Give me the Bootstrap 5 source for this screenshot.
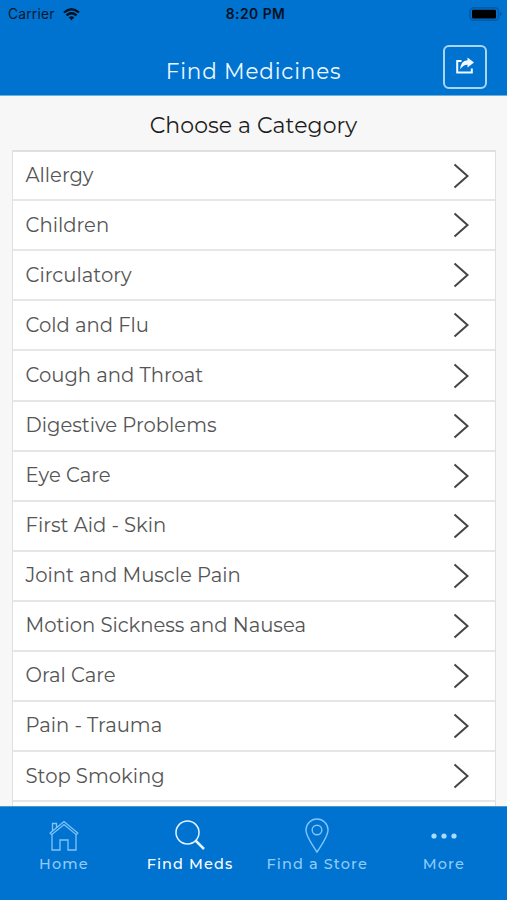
<!DOCTYPE html>
<html lang="en">
<head>
<meta charset="utf-8">
<meta name="viewport" content="width=device-width, initial-scale=1">
<title>Find Medicines</title>
<link href="https://cdn.jsdelivr.net/npm/bootstrap@5.3.0/dist/css/bootstrap.min.css" rel="stylesheet">
<style>
body{font-family:Montserrat,Inter,sans-serif;background:#f7f7f7;color:#1d1d1d}
svg{display:block;flex:none}
.app-top{height:96px;background:#0073d1;border-bottom:1px solid #6db0dc}
.status{height:28px;padding:0 4px 0 8px;font-family:Inter,sans-serif;font-size:13.8px;letter-spacing:.2px;color:#06182c;line-height:28px}
.status .clock{font-weight:600;font-size:13.8px;letter-spacing:.5px;color:#03101e}
.title-bar{height:67px;padding:17px 20px 6px}
.title-spacer{width:44px}
.page-title{font-size:21.5px;letter-spacing:.85px;color:#eef8ff;line-height:28px;padding-top:12px}
.share{width:44px;height:44px;border:2px solid #a9d5f7;border-radius:6px;padding:0}
.heading{font-size:22px;height:54px;line-height:60px;letter-spacing:.08px}
.app-main{height:710px}
.cats{margin:0 11px 0 12px;border:1.5px solid #e0e0e0;border-top-width:2px;border-bottom:0;border-radius:0}
.cats .list-group-item{height:50.1px;border:0;border-bottom:2px solid #e6e6e6;padding:0 25px 0 12.500px;color:#555;font-size:19.6px;border-radius:0}
.cats .list-group-item:first-child{height:49.2px}
.tabs{height:94px;background:#0073d1;border-top:1px solid #4f97c8}
.tab{width:126.7px;padding:9px 0 0 1px;font-size:14.5px;letter-spacing:1.1px;color:#91cbf8;line-height:21px;text-decoration:none;font-weight:500}
.tab svg{height:38px}
.tab.active{color:#fff;padding-left:0}
</style>
</head>
<body class="overflow-hidden">
<header class="app-top">
  <div class="status d-flex justify-content-between align-items-center">
    <div class="d-flex align-items-center gap-2 col-4"><span>Carrier</span>
      <svg width="17" height="13" viewBox="0 0 17 13" fill="none" stroke="#03101e" stroke-width="2.3"><path d="M1 4.5Q8.500-2 16 4.500M3.500 7.400Q8.500 3.100 13.500 7.400"/><path d="M5.700 9.300Q8.500 7.200 11.300 9.300L8.500 12.300Z" fill="#03101e" stroke="none"/></svg>
    </div>
    <span class="clock">8:20 PM</span>
    <div class="col-4 d-flex justify-content-end">
      <svg width="34" height="14" viewBox="0 0 34 14"><rect x="1" y=".8" width="28.500" height="12.400" rx="3.500" fill="none" stroke="#07549a" stroke-width="1.300"/><rect x="3" y="2.700" width="24" height="8.800" rx="1.300" fill="#000"/><path d="M31 5v4q1.500-.6 1.500-2T31 5" fill="#07549a"/></svg>
    </div>
  </div>
  <div class="title-bar d-flex">
    <div class="title-spacer"></div>
    <h1 class="page-title flex-fill text-center fw-normal m-0">Find Medicines</h1>
    <button class="btn share d-flex align-items-center justify-content-center" aria-label="Share">
      <svg width="20" height="20" viewBox="0 0 20 20"><path d="M6.500 4H2.200v11.500h14.600V11.500" fill="none" stroke="#f1faff" stroke-width="2"/><path d="M12.500 .5l6.500 5-6.500 5V7.800Q8 7.700 5.200 12.500 5.500 3.800 12.500 3.200Z" fill="#f1faff"/></svg>
    </button>
  </div>
</header>
<main class="app-main overflow-hidden">
  <h2 class="heading text-center fw-normal m-0">Choose a Category</h2>
  <div class="list-group cats" id="cats"></div>
</main>
<nav class="tabs d-flex">
  <a class="tab d-flex flex-column align-items-center"><svg width="32" viewBox="0 0 32 38" fill="none" stroke="#80c4f8" stroke-width="1.300"><path d="M2.200 17 16 5.500 29.800 17l-1.500 1.700L16 8.500 3.700 18.700ZM4.500 15V7.500h4v4M4 19v15h8V24h8v10h8V19"/></svg>Home</a>
  <a class="tab active d-flex flex-column align-items-center"><svg width="32" viewBox="0 0 32 38" fill="none" stroke="#e2f4ff"><circle cx="13.500" cy="16.500" r="11.500" stroke-width="1.500"/><path d="m21.500 24.500 8.500 8.500" stroke-width="2.500"/></svg>Find Meds</a>
  <a class="tab d-flex flex-column align-items-center"><svg width="32" viewBox="0 0 32 38" fill="none" stroke="#80c4f8" stroke-width="1.400"><path d="M16 36Q5 20 5 14a11 11 0 0 1 22 0q0 6-11 22Z"/><circle cx="16" cy="14" r="4.800"/></svg>Find a Store</a>
  <a class="tab d-flex flex-column align-items-center"><svg width="32" viewBox="0 0 32 38" fill="#a9dbff"><circle cx="6" cy="20" r="2.600"/><circle cx="16" cy="20" r="2.600"/><circle cx="26" cy="20" r="2.600"/></svg>More</a>
</nav>
<script src="https://cdn.jsdelivr.net/npm/bootstrap@5.3.0/dist/js/bootstrap.bundle.min.js"></script>
<script>
const categories=["Allergy","Children","Circulatory","Cold and Flu","Cough and Throat","Digestive Problems","Eye Care","First Aid - Skin","Joint and Muscle Pain","Motion Sickness and Nausea","Oral Care","Pain - Trauma","Stop Smoking",""];
document.getElementById("cats").innerHTML=categories.map(c=>`<a class="list-group-item d-flex align-items-center justify-content-between"><span>${c}</span><svg width="18" height="26" viewBox="0 0 18 26" fill="none" stroke="#444" stroke-width="2"><path d="M2.500 1.500 15.500 13 2.500 24.500"/></svg></a>`).join("");
</script>
</body>
</html>
